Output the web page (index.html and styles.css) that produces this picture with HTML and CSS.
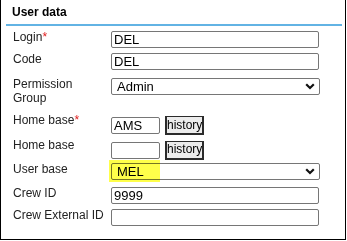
FILE: index.html
```html
<!DOCTYPE html>
<html lang="en">
<head>
  <meta charset="UTF-8">
  <meta name="viewport" content="width=device-width, initial-scale=1.0">
  <title>User data</title>
  <link rel="stylesheet" href="styles.css">
</head>
<body>
  <div class="panel">
    <h2 class="panel-title">User data</h2>

    <div class="form">
      <label class="label">Login<span class="req">*</span></label>
      <div class="field"><input class="input" type="text" value="DEL"></div>

      <label class="label">Code</label>
      <div class="field"><input class="input" type="text" value="DEL"></div>

      <label class="label">Permission Group</label>
      <div class="field">
        <select class="select">
          <option>Admin</option>
        </select>
      </div>

      <label class="label">Home base<span class="req">*</span></label>
      <div class="field combo">
        <input class="input short" type="text" value="AMS">
        <button class="btn" type="button">history</button>
      </div>

      <label class="label">Home base</label>
      <div class="field combo">
        <input class="input short" type="text" value="">
        <button class="btn" type="button">history</button>
      </div>

      <label class="label">User base</label>
      <div class="field highlighted">
        <select class="select">
          <option>MEL</option>
        </select>
        <span class="marker"></span>
      </div>

      <label class="label">Crew ID</label>
      <div class="field"><input class="input" type="text" value="9999"></div>

      <label class="label">Crew External ID</label>
      <div class="field"><input class="input" type="text" value=""></div>
    </div>
  </div>
</body>
</html>
```

FILE: styles.css
```css
body {
  margin: 0;
  font-family: "Liberation Sans", Arial, sans-serif;
  font-size: 12px;
  color: #222;
  background: #fff;
}
.panel {
  width: 346px;
  box-sizing: border-box;
  border: 1px solid #000;
  border-top: none;
  padding: 0 3px 13px 5px;
}
.panel-title {
  margin: 0;
  padding: 5px 6px 4px;
  font-size: 12px;
  line-height: 15px;
  font-weight: bold;
  color: #000;
  border-bottom: 2px solid #62b3e4;
}
.form {
  display: grid;
  grid-template-columns: 98px 209px;
  grid-template-rows: 22px 25px 36px 25px 24px 24px 22px auto;
  padding: 4px 0 0 7px;
}
.label {
  line-height: 14px;
  padding-right: 5px;
  color: #222;
}
.req {
  color: #e02020;
}
.field {
  margin-top: 1px;
  position: relative;
}
.field.combo {
  margin-top: 0;
  display: flex;
  align-items: center;
  gap: 5px;
}
.input,
.select {
  box-sizing: border-box;
  height: 17px;
  margin: 0;
  border: 1px solid #767676;
  border-radius: 2px;
  font-family: "Liberation Sans", Arial, sans-serif;
  font-size: 13px;
  color: #000;
  background: #fff;
  outline: none;
}
.input {
  width: 208px;
  padding: 0 2px;
}
.input.short {
  width: 49px;
}
.select {
  width: 209px;
  display: block;
  padding: 0 0 0 5px;
  appearance: none;
  -webkit-appearance: none;
  background-image: url("data:image/svg+xml,%3Csvg xmlns='http://www.w3.org/2000/svg' width='10' height='7' viewBox='0 0 10 7'%3E%3Cpath d='M1.2 1.3 L5 5 L8.8 1.3' fill='none' stroke='%23111' stroke-width='2.2'/%3E%3C/svg%3E");
  background-repeat: no-repeat;
  background-position: right 4px center;
  line-height: 15px;
}
.btn {
  box-sizing: border-box;
  width: 39px;
  height: 19px;
  margin: 0;
  padding: 0;
  border: 2px solid #2b2b2b;
  border-top-width: 1px;
  background: #ececec;
  font-family: "Liberation Sans", Arial, sans-serif;
  font-size: 12px;
  line-height: 15px;
  color: #000;
}
.marker {
  position: absolute;
  left: -2px;
  top: -3px;
  width: 51px;
  height: 22px;
  background: #ffff4a;
  mix-blend-mode: multiply;
  pointer-events: none;
}
```
